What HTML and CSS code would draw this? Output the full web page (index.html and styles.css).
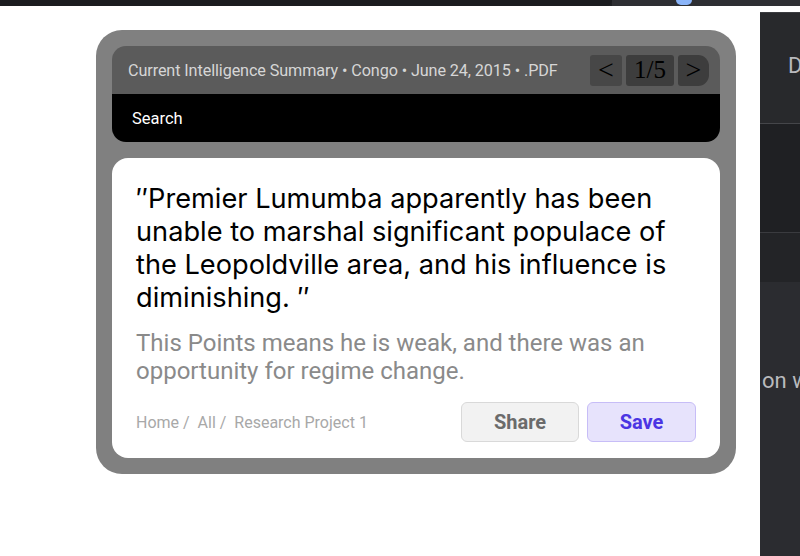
FILE: index.html
```html
<!DOCTYPE html>
<html>
<head>
<meta charset="utf-8">
<link rel="stylesheet" href="styles.css">
</head>
<body>
<div class="topbar">
  <div class="tab-left"></div>
  <div class="tab-right"><span class="dot"></span></div>
</div>
<div class="window">
  <main class="page">
    <section class="card">
      <header class="head">
        <div class="meta">
          <span class="meta-text">Current Intelligence Summary • Congo • June 24, 2015 • .PDF</span>
          <div class="pager">
            <span class="pg pg-prev">&lt;</span>
            <span class="pg pg-count">1/5</span>
            <span class="pg pg-next">&gt;</span>
          </div>
        </div>
        <div class="search">Search</div>
      </header>
      <article class="body">
        <p class="quote">″Premier Lumumba apparently has been unable to marshal significant populace of the Leopoldville area, and his influence is diminishing. ″</p>
        <p class="note">This Points means he is weak, and there was an opportunity for regime change.</p>
        <div class="foot">
          <nav class="crumbs">Home /&nbsp; All /&nbsp; Research Project 1</nav>
          <div class="actions">
            <button class="btn btn-share">Share</button>
            <button class="btn btn-save">Save</button>
          </div>
        </div>
      </article>
    </section>
  </main>
  <aside class="side">
    <div class="side-a"><span class="side-title">Details</span></div>
    <div class="side-b"></div>
    <div class="side-c"></div>
    <div class="side-d"><span class="side-text">on with</span></div>
  </aside>
</div>
</body>
</html>
```

FILE: styles.css
```css
* { box-sizing: border-box; }
html, body { margin: 0; padding: 0; }
body {
  width: 800px;
  height: 556px;
  overflow: hidden;
  background: #ffffff;
  font-family: Roboto, "Liberation Sans", Arial, sans-serif;
}

.topbar {
  height: 6px;
  display: flex;
  background: #1f2023;
}
.tab-left { width: 612px; background: #1b1c1f; border-bottom-right-radius: 6px; }
.tab-right { flex: 1; background: #2e2f33; position: relative; }
.dot {
  position: absolute;
  left: 64px;
  top: 0;
  width: 16px;
  height: 5px;
  background: #8ab4f8;
  border-radius: 0 0 6px 6px;
}

.window { display: flex; height: 550px; }

.page {
  width: 760px;
  background: #ffffff;
  padding: 24px 0 0 96px;
}

.card {
  width: 640px;
  height: 444px;
  background: #808080;
  border-radius: 26px;
  padding: 16px;
  display: flex;
  flex-direction: column;
  gap: 16px;
}

.head {
  border-radius: 14px;
  overflow: hidden;
}
.meta {
  height: 48px;
  background: #5b5b5b;
  display: flex;
  align-items: center;
  justify-content: space-between;
  padding: 0 11px 0 16px;
}
.meta-text {
  color: #d6d6d6;
  font-size: 16.2px;
  letter-spacing: -0.1px;
}
.pager { display: flex; gap: 4px; }
.pg {
  height: 31px;
  display: flex;
  align-items: center;
  justify-content: center;
  font-family: "Liberation Serif", "Times New Roman", serif;
  font-size: 25px;
  color: #000;
  background: #3d3d3d;
  border-radius: 3px;
}
.pg-prev { width: 32px; background: #474747; font-size: 28px; }
.pg-next { width: 31px; border-radius: 3px 11px 11px 3px; font-size: 28px; }
.pg-count { width: 48px; }

.search {
  height: 48px;
  background: #000;
  color: #fff;
  font-size: 16.5px;
  display: flex;
  align-items: center;
  padding-left: 20px;
}

.body {
  flex: 1;
  background: #fff;
  border-radius: 16px;
  padding: 24px 24px 16px 24px;
  display: flex;
  flex-direction: column;
}
.quote {
  margin: 0;
  font-family: Inter, "Liberation Sans", Arial, sans-serif;
  font-size: 27.2px;
  line-height: 33px;
  color: #000;
}
.note {
  margin: 15px 0 0;
  font-size: 24px;
  line-height: 28px;
  color: #8a8a8a;
}
.foot {
  margin-top: auto;
  display: flex;
  align-items: center;
  justify-content: space-between;
}
.crumbs {
  color: #a8a8a8;
  font-size: 16px;
}
.actions { display: flex; gap: 8px; }
.btn {
  height: 40px;
  border-radius: 6px;
  font-family: Roboto, "Liberation Sans", Arial, sans-serif;
  font-size: 20px;
  font-weight: 700;
  padding: 0;
}
.btn-share {
  width: 118px;
  background: #f2f2f2;
  border: 1px solid #d9d9d9;
  color: #6b6b6b;
}
.btn-save {
  width: 109px;
  background: #e7e3fc;
  border: 1px solid #c7bdf7;
  color: #4b35e3;
}

.side {
  width: 40px;
  background: #2b2c30;
  display: flex;
  flex-direction: column;
  overflow: hidden;
  border-top: 1px solid #3c3d41;
  margin-top: 6px;
}
.side-a {
  height: 111px;
  background: #28292c;
  border-bottom: 1px solid #45464a;
  padding: 40px 0 0 28px;
}
.side-title {
  color: #b8b9bd;
  font-size: 22px;
  white-space: nowrap;
}
.side-b {
  height: 109px;
  background: #1f2023;
  border-bottom: 1px solid #3a3b3f;
}
.side-c {
  height: 49px;
  background: #232427;
}
.side-d {
  flex: 1;
  background: #2b2c30;
  padding: 86px 0 0 2px;
  white-space: nowrap;
}
.side-text {
  color: #b9babd;
  font-size: 22px;
}
```
